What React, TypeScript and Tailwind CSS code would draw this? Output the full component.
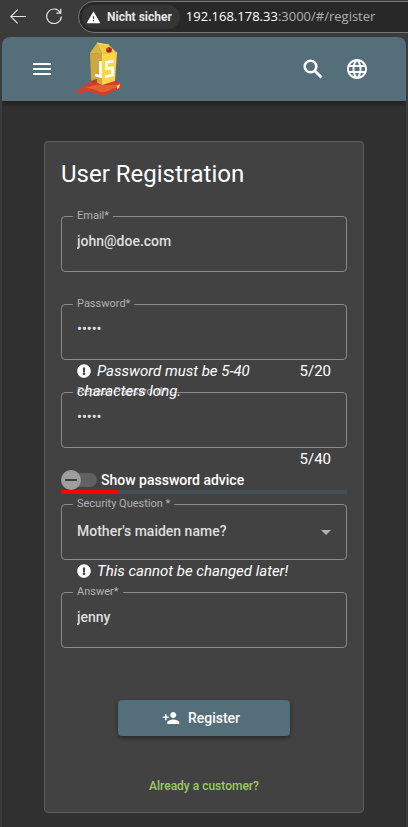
import { useState } from "react";
import type { ReactNode } from "react";
import { MdArrowDropDown, MdLanguage, MdMenu, MdPersonAdd, MdWarning } from "react-icons/md";
import { FaExclamationCircle } from "react-icons/fa";

function BrowserBar() {
  return (
    <div className="flex h-[37px] items-start overflow-hidden bg-[#3b3b3b]">
      <div className="flex h-8 shrink-0 items-center gap-5 pr-4 pl-[10px] text-[#e3e3e3]">
        <button type="button" aria-label="Zurück">
          <svg viewBox="0 0 16 16" className="size-4" fill="none" stroke="currentColor" strokeWidth="1.2">
            <path d="M16 8.5H.8M7.6 1.7.8 8.5l6.8 6.8" />
          </svg>
        </button>
        <button type="button" aria-label="Neu laden">
          <svg viewBox="0 0 16 16" className="size-4" fill="none" stroke="currentColor" strokeWidth="1.2">
            <path d="M14.3 4.6A7.3 7.3 0 1 0 15.3 8.5M14.8.8v4.4h-4.5" />
          </svg>
        </button>
      </div>
      <div className="mt-px -mr-6 flex h-8 flex-1 items-center gap-1.5 rounded-full border border-[#757575] bg-[#282828] pl-[3px] whitespace-nowrap">
        <span className="flex h-6 items-center gap-1.5 rounded-full bg-[#353535] pr-2 pl-1 font-[Roboto,sans-serif] text-xs font-bold text-[#e6e6e6]">
          <MdWarning className="size-[15px] text-white" />
          Nicht sicher
        </span>
        <span className="font-['Open_Sans','Noto_Sans',sans-serif] text-[13px] text-[#b0b0b0]">
          <span className="text-white">192.168.178.33</span>:3000/#/register
        </span>
      </div>
    </div>
  );
}

function Logo() {
  return (
    <svg viewBox="0 0 60 64" className="h-16 w-[60px]" role="img" aria-label="Juice Shop">
      <path d="M5 55c5-2 8-6 13-9 5-3 11-2 17-2 7 1 16 0 17 4 0 5-5 4-9 6-4 3-7 4-12 4-5-1-9-4-15-3-4 1-9 2-11 0z" fill="#d23f28" />
      <path d="M16 51c5-2 10-4 17-3 6 1 12-1 17 0-3 3-7 3-12 6-4 2-9 1-12-1-3-1-6-2-10-2z" fill="#e4622f" />
      <path d="m20 16 12 1v31l-11-5z" fill="#d0a73c" />
      <path d="m32 17 15-2-2 29-13 4z" fill="#fad648" />
      <path d="m27 6 12 2 8 8-15 1z" fill="#f3ca43" />
      <path d="m27 6-7 10 12 1z" fill="#dcb540" />
      <path d="m27 6 12 2" fill="none" stroke="#f9e07a" />
      <circle cx="39" cy="13" r="2.8" fill="#a3210f" />
      <circle cx="38.2" cy="12" r="1" fill="#e2553a" />
      <path d="M30.5 24v15.5L25 38M43.5 24l-7 1.5v6l6-.5v7l-7.500 2" fill="none" stroke="#fff" strokeWidth="2.8" />
      <path d="m23 43 4-1v4l-5 1z" fill="#c33a22" />
      <path d="m47 49 3-2-1 4-2 1z" fill="#f7d9d0" />
    </svg>
  );
}

function SearchIcon() {
  return (
    <svg viewBox="0 0 24 24" className="size-6" fill="none" stroke="currentColor">
      <circle cx="9.5" cy="9.5" r="5.8" strokeWidth="2.6" />
      <path d="m14 14 6.5 6.5" strokeWidth="2.8" />
    </svg>
  );
}

const control =
  "h-14 w-full appearance-none rounded border border-[#8a8a8a] bg-transparent px-[15px] text-sm font-medium text-[#dedede] outline-none focus:border-white";
const textInput = `${control} pb-1.5`;

interface FieldProps {
  id: string;
  label: string;
  children: ReactNode;
  hint?: string;
  count?: string;
}

function Field({ id, label, children, hint, count }: FieldProps) {
  return (
    <div>
      <div className="relative">
        {children}
        <label htmlFor={id} className="absolute -top-2 left-3 bg-[#424242] px-1 text-[11px] leading-4 text-[#b3b3b3]">
          {label}
        </label>
      </div>
      <div className="relative z-10 flex h-8 items-start gap-4 px-4 pt-px text-[15px] leading-5 text-white">
        <p className="flex-1 italic">
          {hint && (
            <>
              <FaExclamationCircle className="mr-1.5 inline size-3.5 align-[-2px]" />
              {hint}
            </>
          )}
        </p>
        {count && <span className="w-[46px] text-right">{count}</span>}
      </div>
    </div>
  );
}

export default function App() {
  const [email, setEmail] = useState("john@doe.com");
  const [password, setPassword] = useState("12345");
  const [repeat, setRepeat] = useState("12345");
  const [advice, setAdvice] = useState(false);
  const [answer, setAnswer] = useState("jenny");

  return (
    <div className="min-h-screen bg-[#3b3b3b] font-[Roboto,sans-serif]">
      <BrowserBar />
      <div className="mx-0.5 overflow-hidden rounded-t-lg bg-[#303030]">
        <header className="flex h-16 items-center bg-[#546e7a] px-7 text-white shadow-[0_3px_6px_rgba(0,0,0,0.4)]">
          <button type="button" aria-label="Menu">
            <MdMenu className="size-6" />
          </button>
          <div className="ml-4">
            <Logo />
          </div>
          <div className="mr-[9px] ml-auto flex items-center gap-5">
            <button type="button" aria-label="Search">
              <SearchIcon />
            </button>
            <button type="button" aria-label="Language">
              <MdLanguage className="size-6" />
            </button>
          </div>
        </header>

        <main className="px-[42px] pt-10 pb-3.5">
          <form
            className="rounded border border-[#5e5e5e] bg-[#424242] px-4 pb-4"
            onSubmit={(e) => e.preventDefault()}
          >
            <h1 className="pt-4 pb-[26px] text-2xl leading-8 text-white">User Registration</h1>

            <Field id="email" label="Email*">
              <input id="email" type="text" className={textInput} value={email} onChange={(e) => setEmail(e.target.value)} />
            </Field>
            <Field id="password" label="Password*" hint="Password must be 5-40 characters long." count={`${password.length}/20`}>
              <input id="password" type="password" className={textInput} value={password} onChange={(e) => setPassword(e.target.value)} />
            </Field>
            <Field id="repeat" label="Repeat Password*" count={`${repeat.length}/40`}>
              <input id="repeat" type="password" className={textInput} value={repeat} onChange={(e) => setRepeat(e.target.value)} />
            </Field>

            <div className="relative z-10 -mt-2.5 mb-2.5">
              <label className="flex h-5 items-center gap-1 text-sm font-medium text-white">
                <input
                  type="checkbox"
                  role="switch"
                  className="peer sr-only"
                  checked={advice}
                  onChange={(e) => setAdvice(e.target.checked)}
                />
                <span className="flex h-3.5 w-9 items-center rounded-full bg-[#616161] peer-checked:justify-end">
                  <span className="flex size-5 items-center justify-center rounded-full bg-[#9e9e9e]">
                    <span className="h-0.5 w-3 bg-[#424242]" />
                  </span>
                </span>
                Show password advice
              </label>
              <div className="h-1 bg-[#455056]">
                <div className="h-full w-1/5 bg-[#ff0000]" />
              </div>
            </div>

            <Field id="question" label="Security Question *" hint="This cannot be changed later!">
              <select id="question" className={`${control} pb-0.5`}>
                <option>Mother's maiden name?</option>
              </select>
              <MdArrowDropDown className="pointer-events-none absolute top-4 right-[9px] size-6 text-[#b3b3b3]" />
            </Field>
            <Field id="answer" label="Answer*">
              <input id="answer" type="text" className={textInput} value={answer} onChange={(e) => setAnswer(e.target.value)} />
            </Field>

            <button
              type="submit"
              className="mx-auto mt-5 flex h-9 w-3/5 items-center justify-center gap-2 rounded bg-[#546e7a] pr-1.5 pb-px text-sm font-medium text-white shadow-[0_2px_4px_rgba(0,0,0,0.4)]"
            >
              <MdPersonAdd className="size-[18px]" />
              Register
            </button>
            <div className="mt-10 text-center text-xs leading-5 font-medium">
              <a href="#login" className="text-[#9ccc65]">
                Already a customer?
              </a>
            </div>
          </form>
        </main>
      </div>
    </div>
  );
}
